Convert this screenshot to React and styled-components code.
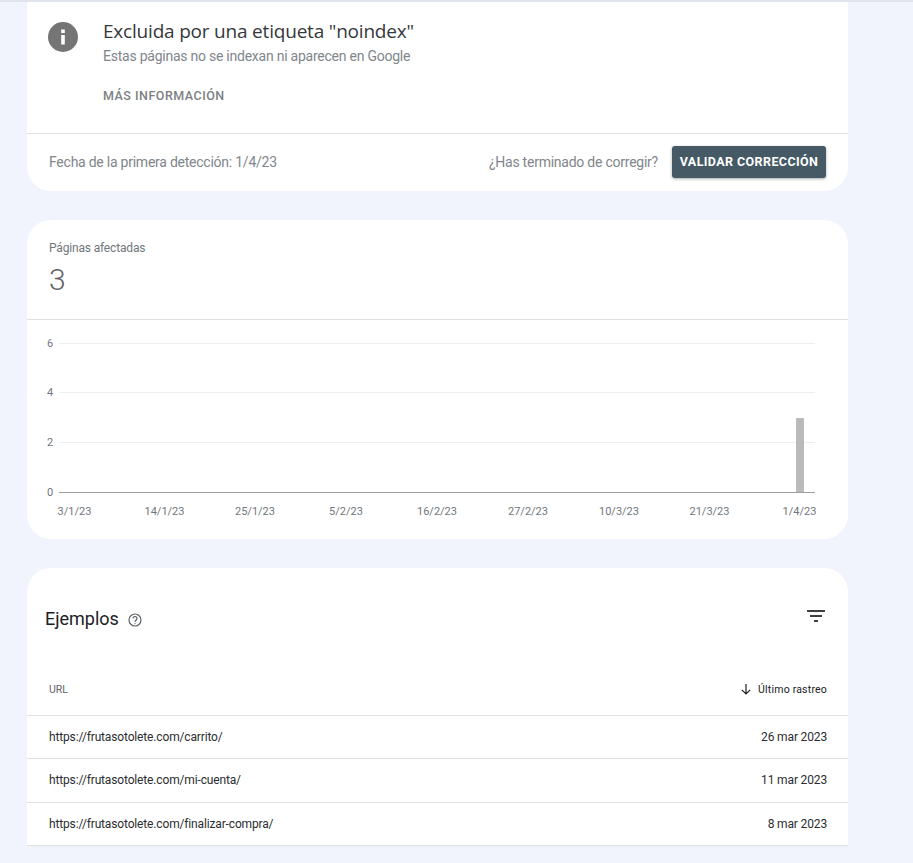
import React from "react";
import styled, { createGlobalStyle } from "styled-components";

const Global = createGlobalStyle`
  html, body { margin: 0; padding: 0; background: #f1f4fc; }
  body { font-family: Roboto, "Liberation Sans", sans-serif; height: 863px; overflow: hidden; }
`;

const Page = styled.div`
  border-top: 2px solid #dfe3ec;
  padding: 0 65px 0 27px;
  display: flex;
  flex-direction: column;
  gap: 29px;
`;
const Card = styled.section`
  background: #fff;
  border-radius: ${p => p.$radius || "24px"};
  overflow: hidden;
`;
const Summary = styled.div`
  display: flex;
  gap: 25px;
  padding: 19px 21px 0;
  height: 112px;
  border-bottom: 1px solid #e0e0e0;
`;
const InfoIcon = styled.svg`
  width: 30px;
  height: 30px;
  margin-top: 1px;
  flex: none;
`;
const SummaryText = styled.div`
  display: flex;
  flex-direction: column;
`;
const Title = styled.h1`
  margin: 0;
  font: 400 19px/20px "Open Sans", Roboto, sans-serif;
  letter-spacing: -0.2px;
  color: #35383b;
`;
const Subtitle = styled.p`
  margin: 5px 0 0;
  font-size: 14px;
  line-height: 20px;
  letter-spacing: -0.24px;
  color: #80868b;
`;
const LearnMore = styled.a`
  margin-top: 20px;
  font-size: 12.5px;
  line-height: 20px;
  font-weight: 500;
  letter-spacing: 0.5px;
  color: #7c7f84;
`;
const FooterRow = styled.div`
  display: flex;
  align-items: center;
  justify-content: space-between;
  height: 55px;
  padding: 0 22px 2px;
`;
const Muted = styled.span`
  font-size: 14px;
  letter-spacing: -0.24px;
  color: #80868b;
`;
const ValidateGroup = styled.div`
  display: flex;
  align-items: center;
  gap: 14px;
`;
const PrimaryButton = styled.button`
  height: 32px;
  width: 154px;
  padding: 0;
  border: 0;
  border-radius: 3px;
  background: #455a64;
  color: #fff;
  font: 700 12.5px Roboto, sans-serif;
  letter-spacing: 0.4px;
  box-shadow: 0 1px 3px rgba(60, 64, 67, 0.45);
`;
const StatBlock = styled.div`
  height: 100px;
  padding: 21px 22px 0;
  box-sizing: border-box;
  border-bottom: 1px solid #e0e0e0;
`;
const StatLabel = styled.div`
  font-size: 12px;
  line-height: 14px;
  letter-spacing: -0.17px;
  color: #72767b;
`;
const StatValue = styled.div`
  margin-top: 7px;
  font-size: 30px;
  line-height: 36px;
  font-weight: 300;
  color: #5f6368;
`;
const Chart = styled.svg`
  display: block;
  width: 821px;
  height: 219px;
  font-family: Roboto, sans-serif;
  font-size: 11px;
  fill: #72767b;
`;
const TableHeader = styled.div`
  display: flex;
  align-items: center;
  justify-content: space-between;
  height: 99px;
  padding: 0 23px 0 18px;
`;
const Heading = styled.div`
  display: flex;
  align-items: center;
  gap: 9px;
  margin-top: 2px;
`;
const HeadingText = styled.h2`
  margin: 0;
  font: 400 18px/24px Roboto, sans-serif;
  color: #202124;
`;
const HelpIcon = styled.svg`
  margin-top: 3px;
`;
const FilterIcon = styled.svg`
  margin-bottom: 3px;
`;
const Row = styled.div`
  display: flex;
  align-items: center;
  justify-content: space-between;
  box-sizing: border-box;
  height: ${p => p.$height || "43.33px"};
  padding: ${p => p.$pad || "0 21px 0 22px"};
  border-bottom: 1px solid #e0e0e0;
  font-size: 12px;
  letter-spacing: -0.15px;
  color: #2b2d30;
`;
const ColumnLabel = styled.span`
  font-size: 10.5px;
  letter-spacing: 0;
  color: #5f6368;
`;
const SortLabel = styled.span`
  display: flex;
  align-items: center;
  gap: 6px;
  font-size: 10.5px;
  letter-spacing: 0.2px;
  color: #202124;
`;

const ticksY = [[343, "6"], [392, "4"], [442, "2"]];
const ticksX = [[74.5, "3/1/23"], [164.5, "14/1/23"], [255, "25/1/23"], [346, "5/2/23"], [437, "16/2/23"], [528, "27/2/23"], [619, "10/3/23"], [709.5, "21/3/23"], [799.5, "1/4/23"]];

const rows = [
  ["https://frutasotolete.com/carrito/", "26 mar 2023"],
  ["https://frutasotolete.com/mi-cuenta/", "11 mar 2023"],
  ["https://frutasotolete.com/finalizar-compra/", "8 mar 2023"],
];

export default function App() {
  return (
    <>
      <Global />
      <Page>
        <Card $radius="0 0 24px 24px">
          <Summary>
            <InfoIcon viewBox="0 0 30 30">
              <circle cx="15" cy="15" r="15" fill="#757575" />
              <rect x="13.2" y="7.5" width="3.6" height="3.6" fill="#fff" />
              <rect x="13.2" y="13" width="3.6" height="9.5" fill="#fff" />
            </InfoIcon>
            <SummaryText>
              <Title>Excluida por una etiqueta "noindex"</Title>
              <Subtitle>Estas páginas no se indexan ni aparecen en Google</Subtitle>
              <LearnMore>MÁS INFORMACIÓN</LearnMore>
            </SummaryText>
          </Summary>
          <FooterRow>
            <Muted>Fecha de la primera detección: 1/4/23</Muted>
            <ValidateGroup>
              <Muted>¿Has terminado de corregir?</Muted>
              <PrimaryButton>VALIDAR CORRECCIÓN</PrimaryButton>
            </ValidateGroup>
          </FooterRow>
        </Card>

        <Card>
          <StatBlock>
            <StatLabel>Páginas afectadas</StatLabel>
            <StatValue>3</StatValue>
          </StatBlock>
          <Chart viewBox="27 320 821 219">
            {ticksY.map(([y, label]) => (
              <g key={label}>
                <line x1="59" x2="815" y1={y + 0.5} y2={y + 0.5} stroke="#eeeeee" />
                <text x="50" y={y + 3.5} textAnchor="middle">{label}</text>
              </g>
            ))}
            <text x="50" y="496" textAnchor="middle">0</text>
            <rect x="796" y="418" width="8" height="74.5" rx="1" fill="#bababa" />
            <line x1="59" x2="815" y1="492.5" y2="492.5" stroke="#9e9e9e" />
            {ticksX.map(([x, label]) => (
              <text key={label} x={x} y="515" textAnchor="middle">{label}</text>
            ))}
          </Chart>
        </Card>

        <Card $radius="24px 24px 0 0">
          <TableHeader>
            <Heading>
              <HeadingText>Ejemplos</HeadingText>
              <HelpIcon width="14" height="14" viewBox="0 0 14 14" fill="none" stroke="#5f6368">
                <circle cx="7" cy="7" r="6" strokeWidth="1.2" />
                <path d="M5 5.5a2 2 0 1 1 3.2 1.6C7.4 7.7 7 8 7 9" strokeWidth="1.2" />
                <circle cx="7" cy="10.6" r="0.7" fill="#5f6368" stroke="none" />
              </HelpIcon>
            </Heading>
            <FilterIcon width="18" height="12" viewBox="0 0 18 12" fill="#3c4043">
              <rect x="0" y="0" width="18" height="2" />
              <rect x="3" y="5" width="12" height="2" />
              <rect x="7" y="10" width="4" height="2" />
            </FilterIcon>
          </TableHeader>
          <Row $height="49px" $pad="0 21px 4px 22px">
            <ColumnLabel>URL</ColumnLabel>
            <SortLabel>
              <svg width="12" height="12" viewBox="0 0 12 12" fill="none" stroke="#202124" strokeWidth="1.2">
                <path d="M6 1v10M1.8 6.8 6 11l4.2-4.2" />
              </svg>
              Último rastreo
            </SortLabel>
          </Row>
          {rows.map(([url, date]) => (
            <Row key={url}>
              <span>{url}</span>
              <span>{date}</span>
            </Row>
          ))}
        </Card>
      </Page>
    </>
  );
}
